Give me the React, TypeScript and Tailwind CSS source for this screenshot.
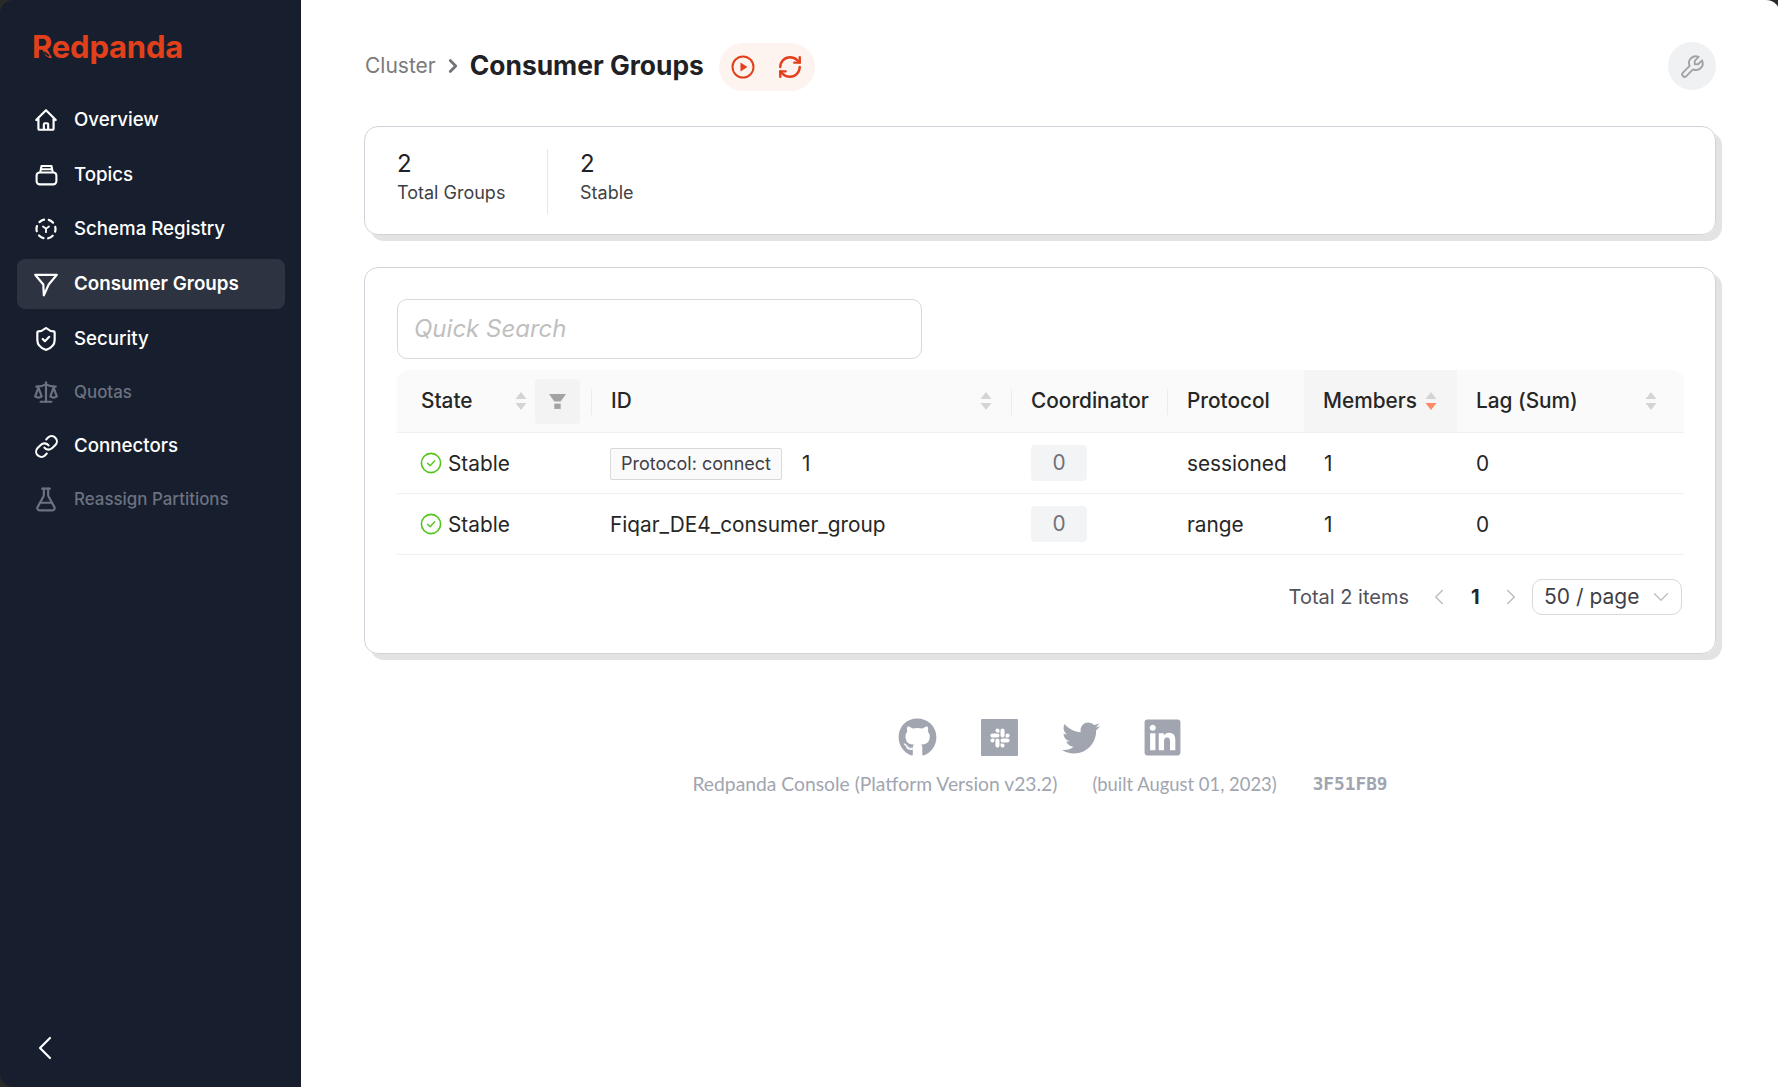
import { ChevronDown, ChevronLeft, ChevronRight, FlaskConical, Link, RefreshCw, Scale, ShieldCheck } from 'lucide-react';
import { FaGithub, FaLinkedin, FaSlack, FaTwitter } from 'react-icons/fa';
import { HiOutlineHome } from 'react-icons/hi';
import { TbTool } from 'react-icons/tb';

function TopicsIcon() {
  return (
    <svg viewBox="0 0 24 24" className="h-[25px] w-[25px]" fill="none" stroke="currentColor" strokeWidth="2" strokeLinejoin="round">
      <rect x="2.5" y="10" width="19" height="11.5" rx="3" />
      <path d="M6 10l1.2-6.2h9.6L18 10M6.5 7h11" />
    </svg>
  );
}

function SchemaIcon() {
  return (
    <svg viewBox="0 0 24 24" className="h-6 w-6" fill="none" stroke="currentColor" strokeWidth="2.2" strokeLinecap="round">
      <circle cx="12" cy="12" r="9.5" strokeDasharray="5.2 4.75" strokeDashoffset="2.5" />
      <path d="M9 9.5l3 2.2 3-2.2M12 11.7v3.5" strokeWidth="1.8" />
    </svg>
  );
}

function FunnelIcon() {
  return (
    <svg viewBox="0 0 24 24" className="h-[26px] w-[26px]" fill="none" stroke="currentColor" strokeWidth="2" strokeLinejoin="round">
      <path d="M2 3.5h20L14.5 12.5 10 22.5 9.5 12.5z" />
    </svg>
  );
}

function SortArrows({ active }: { active?: boolean }) {
  return (
    <svg viewBox="0 0 12 20" className="h-5 w-3" aria-hidden="true">
      <path d="M6 1l5.5 7H.5z" fill="#d4d4d4" />
      <path d="M6 19l5.5-7H.5z" fill={active ? '#ff8a65' : '#d4d4d4'} />
    </svg>
  );
}

function StableBadge() {
  return (
    <span className="flex items-center gap-[6px] text-[#262626]">
      <svg viewBox="0 0 22 22" className="-mt-[3px] h-[22px] w-[22px]" fill="none" stroke="#52c41a" strokeWidth="1.6" strokeLinecap="round" strokeLinejoin="round">
        <circle cx="11" cy="11" r="9.6" />
        <path d="M7.5 11.2l2.6 2.6 4.6-5" strokeWidth="1.3" />
      </svg>
      Stable
    </span>
  );
}

function CoordinatorBadge() {
  return (
    <span className="flex h-9 w-14 items-center justify-center rounded-[4px] bg-[#f3f4f6] text-[#71717a]">0</span>
  );
}

const navItems = [
  { label: 'Overview', icon: <HiOutlineHome className="h-[28px] w-[28px]" /> },
  { label: 'Topics', icon: <TopicsIcon /> },
  { label: 'Schema Registry', icon: <SchemaIcon /> },
  { label: 'Consumer Groups', icon: <FunnelIcon />, active: true },
  { label: 'Security', icon: <ShieldCheck className="h-[26px] w-[26px]" strokeWidth={2} /> },
  { label: 'Quotas', icon: <Scale className="h-[26px] w-[26px]" strokeWidth={2} />, disabled: true },
  { label: 'Connectors', icon: <Link className="h-[25px] w-[25px]" strokeWidth={2} /> },
  { label: 'Reassign Partitions', icon: <FlaskConical className="h-[27px] w-[27px]" strokeWidth={2} />, disabled: true },
];

function Sidebar() {
  return (
    <aside className="flex h-full w-[301px] shrink-0 flex-col rounded-l-[14px] bg-[#171e2d] pr-[16px] pl-[17px] shadow-[0_0_14px_rgba(0,0,0,0.06)]">
      <div className="relative mt-[27px] ml-[15px] h-[40px] text-[31px] leading-[40px] font-bold tracking-[-0.2px] text-[#e2401b]">
        Redpanda
        <svg viewBox="0 0 20 14" className="absolute top-[24px] left-[8px] h-[14px] w-[20px]" aria-hidden="true">
          <path d="M4 1l5 4M5 5.5l6 3.5" stroke="#171e2d" strokeWidth="2" fill="none" />
        </svg>
      </div>
      <nav className="mt-[28px] flex flex-col gap-[4.7px]">
        {navItems.map((item) => (
          <div
            key={item.label}
            className={`flex items-center gap-[15px] rounded-[8px] pl-[16px] ${item.active ? 'h-[50px] bg-[#2d3340] text-[18.8px] font-semibold text-white' : item.disabled ? 'h-[48px] text-[16.9px] font-medium text-[#6b7280]' : 'h-[50px] text-[18.7px] font-medium text-white'}`}
          >
            <span className="flex w-[26px] justify-center">{item.icon}</span>
            <span>{item.label}</span>
          </div>
        ))}
      </nav>
      <div className="mt-auto mb-[19px] ml-[8px] text-white">
        <ChevronLeft className="h-10 w-10" strokeWidth={1.3} />
      </div>
    </aside>
  );
}

const thBase = 'relative h-[62px] px-[19px] text-left align-middle font-medium';
const tdBase = 'h-[61px] border-b border-[#f0f0f0] px-[19px] pt-[3px] align-middle font-normal';
const tdBadge = 'h-[61px] border-b border-[#f0f0f0] px-[19px] align-middle font-normal';

function ColDivider() {
  return <span className="absolute top-[19px] right-0 h-[26px] w-px bg-[#ececec]" />;
}

function GroupsTable() {
  return (
    <table className="mt-[11px] w-[1287px] table-fixed border-collapse text-[20.8px] text-[#262626]">
      <colgroup>
        <col className="w-[195px]" />
        <col className="w-[420px]" />
        <col className="w-[156px]" />
        <col className="w-[136px]" />
        <col className="w-[153px]" />
        <col className="w-[227px]" />
      </colgroup>
      <thead>
        <tr className="border-b border-[#f0f0f0] bg-[#fafafa]">
          <th className={`${thBase} rounded-tl-[12px] pl-[24px]`}>
            <span>State</span>
            <span className="absolute top-[21px] right-[65px] flex"><SortArrows /></span>
            <span className="absolute top-[9px] right-[12px] flex h-[45px] w-[45px] items-center justify-center rounded-[4px] bg-[#f3f3f3]">
              <svg viewBox="0 0 16 16" className="h-[17px] w-[17px]"><path d="M0 1h16l-5 7v0H5z" fill="#a3a3a3" /><rect x="5" y="10" width="6" height="5" fill="#a3a3a3" /></svg>
            </span>
            <ColDivider />
          </th>
          <th className={thBase}>
            ID
            <span className="absolute top-[21px] right-[20px] flex"><SortArrows /></span>
            <ColDivider />
          </th>
          <th className={thBase}>Coordinator<ColDivider /></th>
          <th className={thBase}>Protocol</th>
          <th className={`${thBase} bg-[#f5f5f5]`}>
            <div className="flex items-center gap-2">
              Members <SortArrows active />
            </div>
          </th>
          <th className={`${thBase} rounded-tr-[12px]`}>
            Lag (Sum)
            <span className="absolute top-[21px] right-[27px] flex"><SortArrows /></span>
          </th>
        </tr>
      </thead>
      <tbody>
        <tr>
          <td className={`${tdBase} pl-[23px]`}><StableBadge /></td>
          <td className={`${tdBadge} pl-[18px]`}>
            <div className="mt-[2px] flex items-center gap-5">
              <span className="flex h-[32px] items-center rounded-[2px] border border-[#d9d9d9] bg-[#fafafa] px-[10px] text-[18px] text-[#3f3f46]">Protocol: connect</span>
              <span>1</span>
            </div>
          </td>
          <td className={tdBadge}><CoordinatorBadge /></td>
          <td className={tdBase}>sessioned</td>
          <td className={`${tdBase} pl-[20px]`}>1</td>
          <td className={tdBase}>0</td>
        </tr>
        <tr>
          <td className={`${tdBase} pl-[23px]`}><StableBadge /></td>
          <td className={`${tdBase} pl-[18px]`}>Fiqar_DE4_consumer_group</td>
          <td className={tdBadge}><CoordinatorBadge /></td>
          <td className={tdBase}>range</td>
          <td className={`${tdBase} pl-[20px]`}>1</td>
          <td className={tdBase}>0</td>
        </tr>
      </tbody>
    </table>
  );
}

function Pagination() {
  return (
    <div className="mt-[24px] flex w-[1287px] items-center justify-end pr-[2px] text-[20px] text-[#52525b]">
      <span>Total 2 items</span>
      <ChevronLeft className="ml-[17px] h-[26px] w-[26px] text-[#bfbfbf]" strokeWidth={1.4} />
      <span className="ml-[19px] w-[10px] font-bold text-[#262626]">1</span>
      <ChevronRight className="ml-[17px] h-[26px] w-[26px] text-[#bfbfbf]" strokeWidth={1.4} />
      <div className="ml-[8px] flex h-[36px] w-[150px] items-center justify-between rounded-[10px] border border-[#d9d9d9] pr-[7px] pl-[11px] text-[21px] text-[#3f3f46]">
        <span>50 / page</span>
        <ChevronDown className="h-[26px] w-[26px] text-[#bfbfbf]" strokeWidth={1.3} />
      </div>
    </div>
  );
}

function Footer() {
  return (
    <footer className="mt-[64px] flex flex-col items-center text-[#a1a5b0]">
      <div className="flex h-[39px] items-center gap-[44px]">
        <FaGithub className="ml-[1px] h-[39px] w-[39px]" />
        <span className="flex h-[37px] w-[37px] items-center justify-center rounded-[1px] bg-[#a1a5b0]">
          <FaSlack className="h-[22px] w-[22px] text-white" />
        </span>
        <FaTwitter className="h-[38px] w-[38px]" />
        <FaLinkedin className="-ml-[2px] h-[41px] w-[41px]" />
      </div>
      <div className="mt-[13px] flex items-center [font-family:Lato,sans-serif]">
        <span className="text-[19.3px]">Redpanda Console (Platform Version v23.2)</span>
        <span className="ml-[35px] text-[18.4px]">(built August 01, 2023)</span>
        <span className="ml-[36px] text-[17.8px] font-bold [font-family:'DejaVu_Sans_Mono',monospace]">3F51FB9</span>
      </div>
    </footer>
  );
}

export default function App() {
  return (
    <div className="flex h-[1087px] w-[1778px] overflow-hidden bg-[#2a2a2a] [font-family:Inter,sans-serif]">
      <Sidebar />
      <main className="flex h-full flex-1 flex-col rounded-tr-[14px] bg-white pt-[42px] pr-[64px] pl-[63px]">
        <header className="flex h-12 items-center">
          <span className="ml-[1px] text-[21px] text-[#7a7a7a]">Cluster</span>
          <ChevronRight className="mx-[6px] h-[22px] w-[22px] text-[#71717a]" strokeWidth={3} />
          <h1 className="text-[26.4px] font-bold text-[#1f2125]">Consumer Groups</h1>
          <div className="mt-[2px] ml-[15px] flex h-12 w-24 items-center justify-center gap-[22px] rounded-full bg-[#fdf3ef] text-[#e2401b]">
            <svg viewBox="0 0 24 24" className="h-6 w-6" fill="none" stroke="currentColor" strokeWidth="2">
              <circle cx="12" cy="12" r="10.5" />
              <path d="M9.5 7.5l7 4.5-7 4.5z" fill="currentColor" stroke="none" />
            </svg>
            <RefreshCw className="h-[26px] w-[26px]" strokeWidth={2.2} />
          </div>
          <button className="ml-auto flex h-12 w-12 items-center justify-center rounded-full bg-[#f0f1f3] text-[#a3a3a3]">
            <TbTool className="h-[27px] w-[27px] -scale-x-100" strokeWidth={1.7} />
          </button>
        </header>

        <section className="mt-[36px] flex rounded-[14px] border border-[#d2d2da] px-[32px] pt-[22px] pb-[20px] shadow-[6px_6px_0_0_#e3e3e3]">
          <div className="h-[65px] w-[151px] border-r border-[#e7e7e7]">
            <div className="text-[24px] leading-[30px] text-[#1f2125]">2</div>
            <div className="text-[18px] leading-[28px] text-[#3f3f46]">Total Groups</div>
          </div>
          <div className="ml-[32px]">
            <div className="text-[24px] leading-[30px] text-[#1f2125]">2</div>
            <div className="text-[18px] leading-[28px] text-[#3f3f46]">Stable</div>
          </div>
        </section>

        <section className="mt-[32px] h-[387px] rounded-[14px] border border-[#d2d2da] pt-[31px] pr-[31px] pl-[32px] shadow-[6px_6px_0_0_#e3e3e3]">
          <div className="flex h-[60px] w-[525px] items-center rounded-[10px] border border-[#d9d9d9] px-4 text-[24px] text-[#bfbfbf] italic">
            Quick Search
          </div>
          <GroupsTable />
          <Pagination />
        </section>

        <Footer />
      </main>
    </div>
  );
}
